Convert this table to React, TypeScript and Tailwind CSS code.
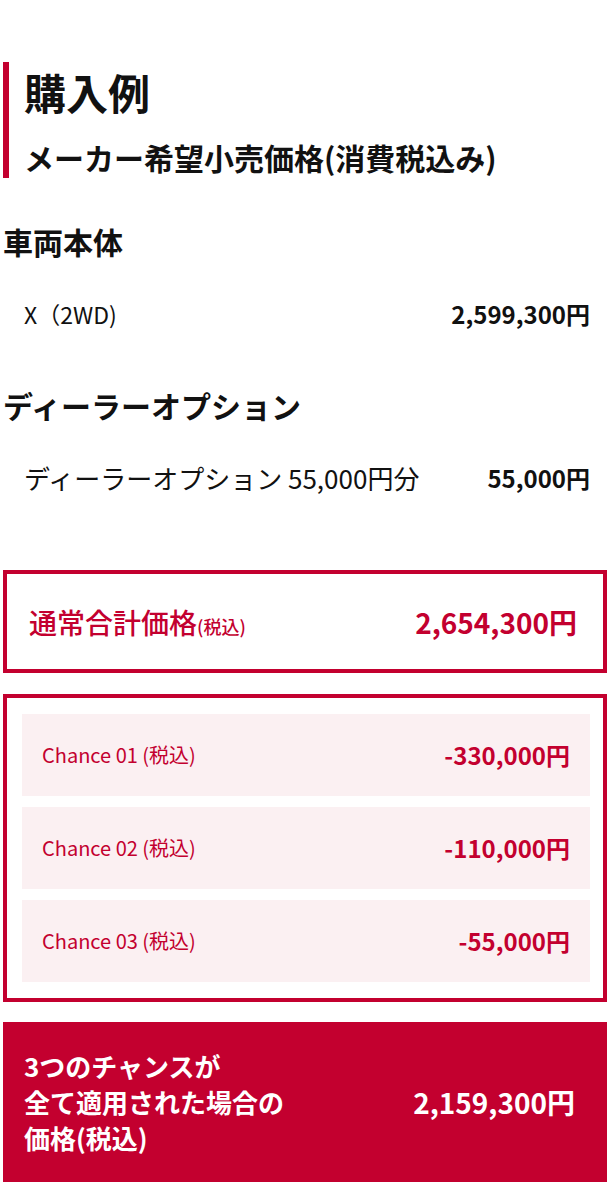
import React from 'react'

interface Chance {
  label: string
  price: string
}

const chances: Chance[] = [
  { label: 'Chance 01', price: '-330,000円' },
  { label: 'Chance 02', price: '-110,000円' },
  { label: 'Chance 03', price: '-55,000円' },
]

export default function App() {
  return (
    <div className="min-h-[1200px] bg-white px-[3px] pt-[62px] pb-[21px] font-['Noto_Sans_CJK_JP','Noto_Sans',sans-serif] text-[#111]">
      <div className="border-l-[6px] border-[#c3002f] pl-[15px] pt-[4px] pb-[1px]">
        <h1 className="text-[42px] font-bold leading-[52px]">購入例</h1>
        <p className="mt-[19px] text-[30px] font-bold leading-[40px]">メーカー希望小売価格(消費税込み)</p>
      </div>

      <h2 className="mt-[43px] text-[30px] font-bold leading-[40px]">車両本体</h2>
      <div className="mt-[36px] flex items-center justify-between pl-[21px] pr-[17px] leading-[34px]">
        <span className="text-[23px]">X（2WD)</span>
        <span className="text-[24px] font-bold">2,599,300円</span>
      </div>

      <h2 className="mt-[54px] text-[30px] font-bold leading-[40px]">ディーラーオプション</h2>
      <div className="mt-[36px] flex items-center justify-between pl-[21px] pr-[17px] leading-[34px]">
        <span className="text-[26px]">ディーラーオプション 55,000円分</span>
        <span className="text-[24px] font-bold">55,000円</span>
      </div>

      <div className="mt-[75px] flex h-[103px] items-center justify-between border-4 border-[#c3002f] pl-[22px] pr-[26px] text-[#c3002f]">
        <span className="text-[28px] font-medium">
          通常合計価格<span className="text-[18px]">(税込)</span>
        </span>
        <span className="text-[28px] font-bold">2,654,300円</span>
      </div>

      <div className="mt-[21px] flex flex-col gap-[11px] border-4 border-[#c3002f] pl-[15px] pr-[13px] py-[16px]">
        {chances.map((c, i) => (
          <div key={i} className="flex h-[82px] items-center justify-between bg-[#fbf0f2] px-[20px] text-[#c3002f]">
            <span className="text-[20px]">{c.label} (税込)</span>
            <span className="text-[24px] font-bold">{c.price}</span>
          </div>
        ))}
      </div>

      <div className="mt-[20px] flex h-[160px] items-center justify-between bg-[#c3002f] pl-[21px] pr-[32px] text-white">
        <p className="text-[26px] font-bold leading-[36px]">
          3つのチャンスが
          <br />
          全て適用された場合の
          <br />
          価格(税込)
        </p>
        <span className="text-[28px] font-bold">2,159,300円</span>
      </div>
    </div>
  )
}
